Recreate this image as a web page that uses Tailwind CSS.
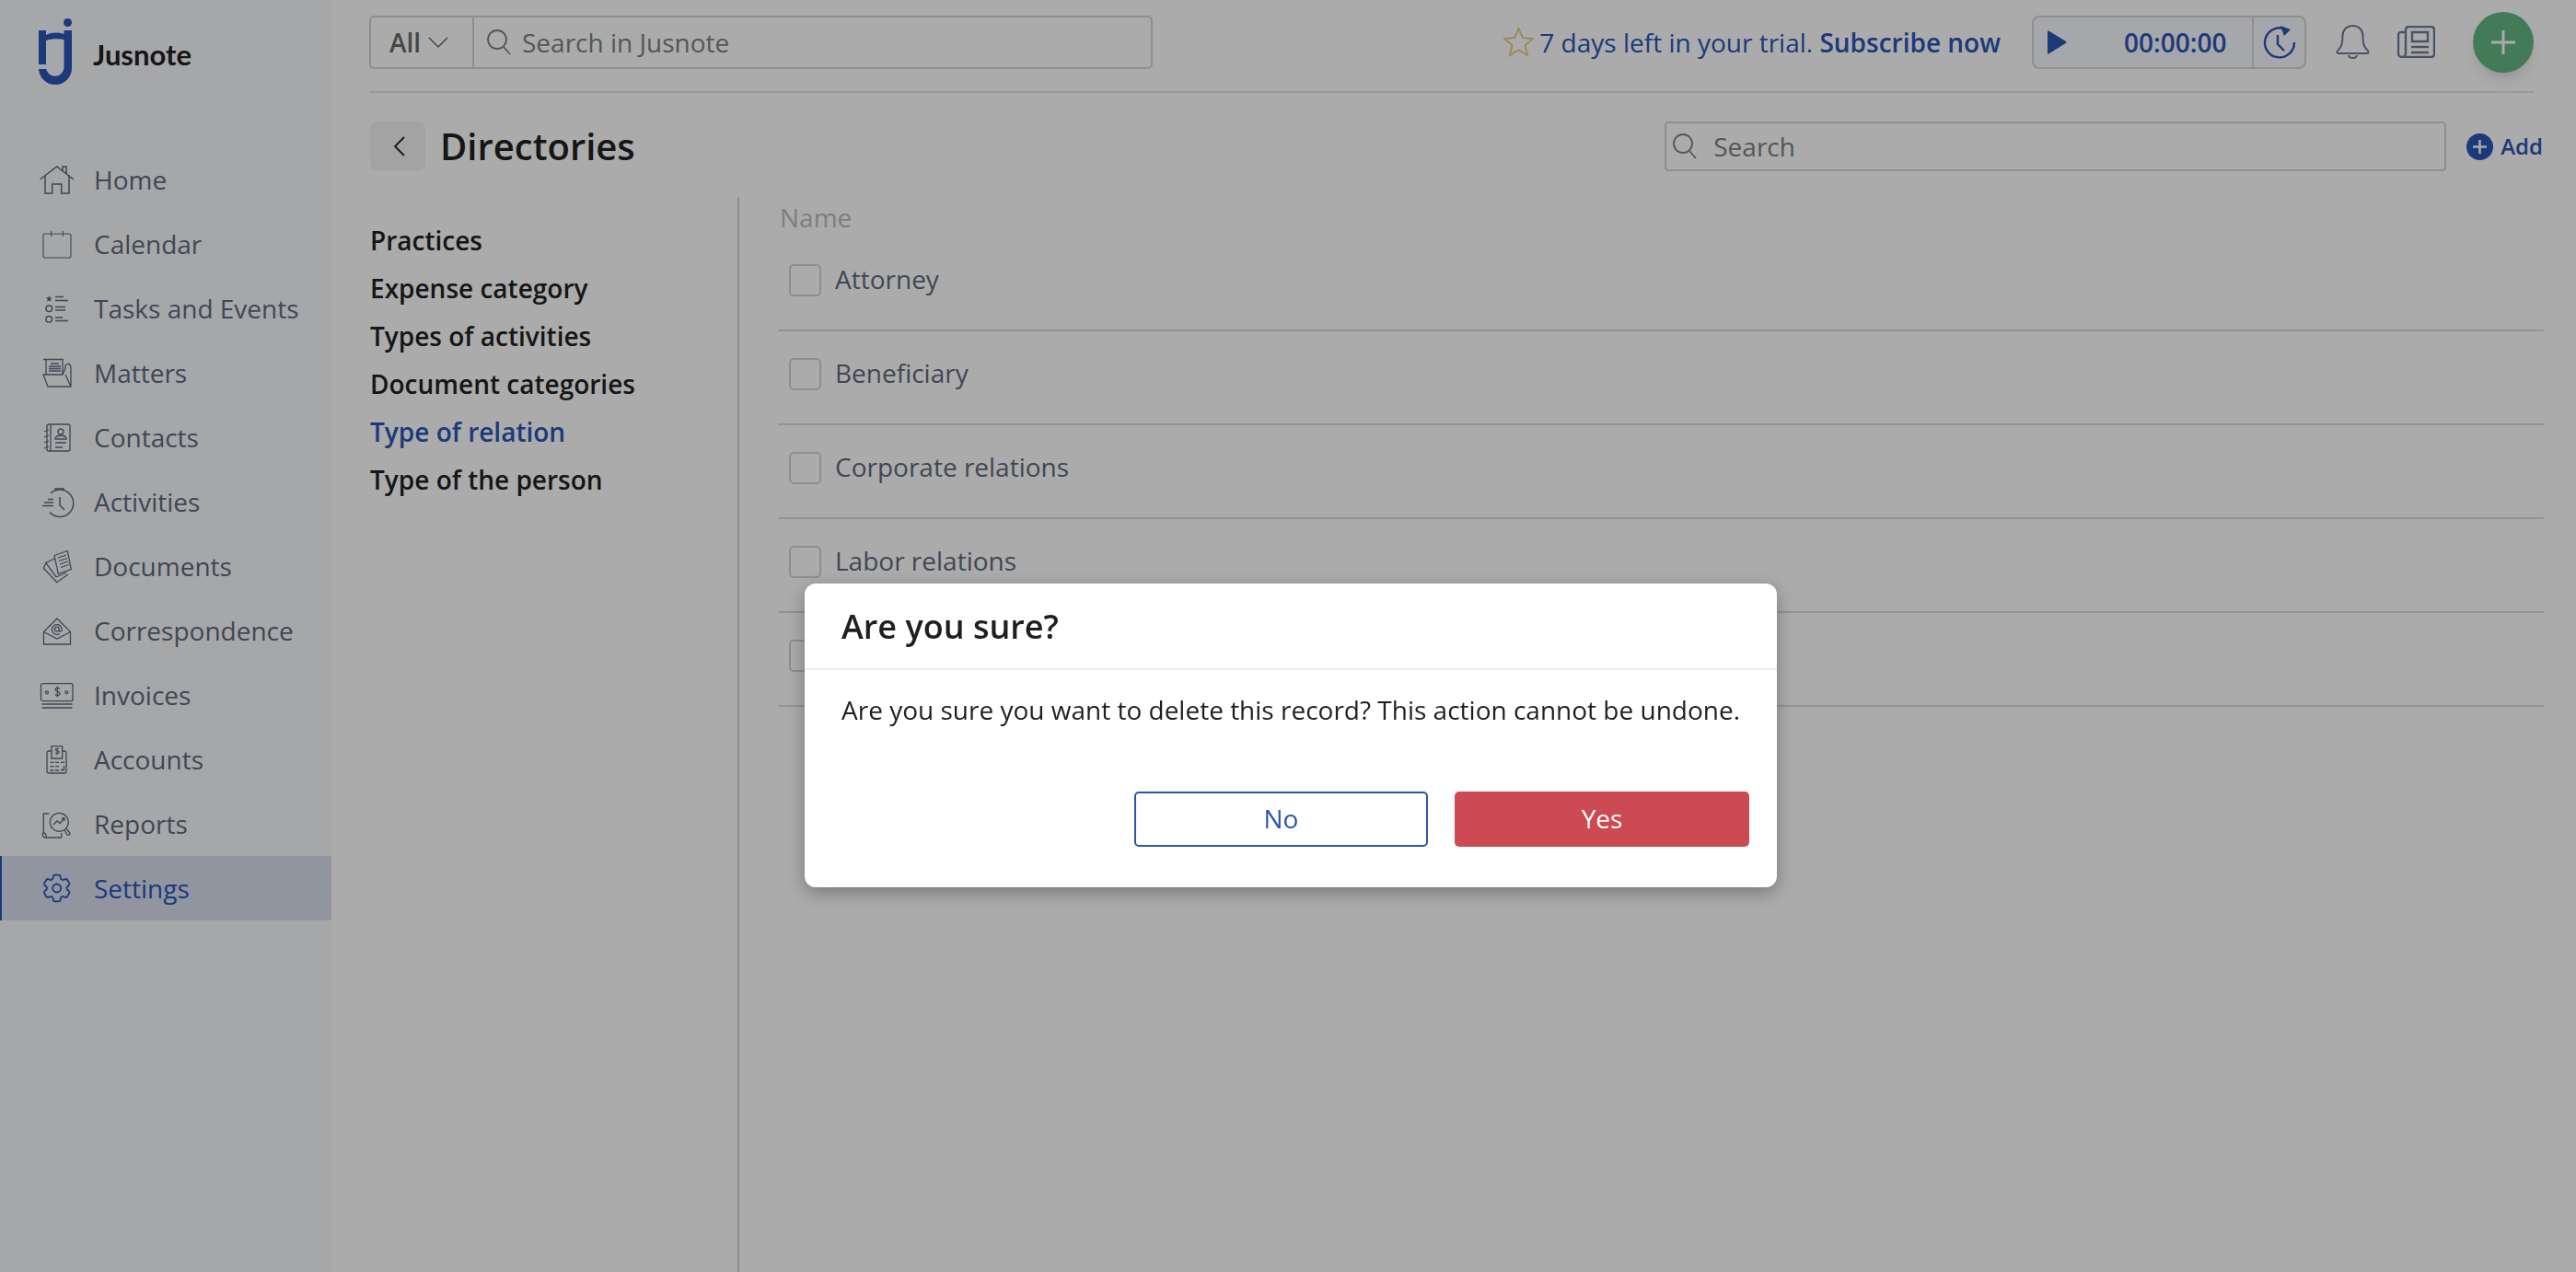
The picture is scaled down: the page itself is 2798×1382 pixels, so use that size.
<!DOCTYPE html>
<html lang="en">
<head>
  <meta charset="UTF-8">
  <title>Jusnote - Directories</title>
  <script src="https://cdn.jsdelivr.net/npm/@tailwindcss/browser@4"></script>
</head>
<body class="font-['Open_Sans',sans-serif] bg-white">
  <div class="flex h-[1382px] w-[2798px] overflow-hidden">

    <!-- sidebar -->
    <aside class="w-[360px] shrink-0 bg-[#f8f9fc] text-[#5f6b7c] text-[28px]">
      <div class="h-[160px] flex items-start">
        <svg class="ml-[40px] mt-[17px] w-[42px] h-[78px]" viewBox="40 17 42 78" fill="#2a56b8">
          <circle cx="73.5" cy="24.5" r="4.5"/>
          <path d="M42 33h8v5c6-3 13-3 19.5-1V33H78v41a18 18 0 0 1-36 0v1h8v-1a9.8 9.8 0 0 0 19.5 0V43c-6-1-14-1-19.5 1v26h-8z"/>
        </svg>
        <span class="ml-[19px] mt-[36px] text-[#222] font-['Lato',sans-serif] font-bold text-[31px]">Jusnote</span>
      </div>
      <nav>
        <a class="h-[70px] flex items-center gap-[20px] pl-[42px]">
          <svg class="w-[40px] h-[40px]" viewBox="0 0 40 40" fill="none" stroke="currentColor" stroke-width="1.5"><path d="M1.5 20 19.7 6 38 20M7 15v20h7.7V25h10v10H33V15M26 11V6h4v8.5"/></svg>
          <span>Home</span>
        </a>
        <a class="h-[70px] flex items-center gap-[20px] pl-[42px]">
          <svg class="w-[40px] h-[40px]" viewBox="0 0 40 40" fill="none" stroke="currentColor" stroke-width="1.1"><path d="M7 9h26a2 2 0 0 1 2 2v22a2 2 0 0 1-2 2H7a2 2 0 0 1-2-2V11a2 2 0 0 1 2-2zM13.700 6v6M26.300 6v6"/></svg>
          <span>Calendar</span>
        </a>
        <a class="h-[70px] flex items-center gap-[20px] pl-[42px]">
          <svg class="w-[40px] h-[40px]" viewBox="0 0 40 40" fill="none" stroke="currentColor" stroke-width="1.5"><path d="m11.300 6 1 2.400 2.600.2-2 1.700.6 2.500-2.200-1.300-2.200 1.300.6-2.500-2-1.700 2.600-.2z" fill="currentColor" stroke="none"/><circle cx="11.300" cy="20.300" r="3.300"/><circle cx="11.300" cy="31.700" r="3.300"/><path d="M18 7.500h9M18 11.500h14M18 18.500h11M18 22h11M18 30h8M18 33.500h14"/></svg>
          <span>Tasks and Events</span>
        </a>
        <a class="h-[70px] flex items-center gap-[20px] pl-[42px]">
          <svg class="w-[40px] h-[40px]" viewBox="0 0 40 40" fill="none" stroke="currentColor" stroke-width="1.300"><path d="M5 5.500h22M8 5.500V22M26 5.500V22M13 10h9M11 13h13M11 15.500h13M11 18h13M5 22h21l3-7v-3l2-1.500h2.500L35 14v21H10zM29 22l6 13"/></svg>
          <span>Matters</span>
        </a>
        <a class="h-[70px] flex items-center gap-[20px] pl-[42px]">
          <svg class="w-[40px] h-[40px]" viewBox="0 0 40 40" fill="none" stroke="currentColor" stroke-width="1.300"><rect x="9" y="6" width="25" height="29" rx="2"/><path d="M13 6v29M6 14l5-2M6 20l5-2M6 26l5-2M6 32l5-2M18 26h12M18 31h8M18 22c0-5 12-5 12 0z"/><circle cx="24" cy="14" r="3"/></svg>
          <span>Contacts</span>
        </a>
        <a class="h-[70px] flex items-center gap-[20px] pl-[42px]">
          <svg class="w-[40px] h-[40px]" viewBox="0 0 40 40" fill="none" stroke="currentColor" stroke-width="1.500"><path d="M13 11A14.700 14.700 0 1 1 12 31.500M17 6h11M23 15v9l5 5M10 17.500h6M6 21h10M4 24.500h12"/></svg>
          <span>Activities</span>
        </a>
        <a class="h-[70px] flex items-center gap-[20px] pl-[42px]">
          <svg class="w-[40px] h-[40px]" viewBox="0 0 40 40" fill="none" stroke="currentColor" stroke-width="1.300"><path d="m17 8.500 14.300-5 4 20-14 5zM21 11l9-3M22 14.500l9-3M23 18l9-3M24 21.500l9-3M17 12 7.700 16.500 19 32l11-5M7.700 17l-2.400 5.300 14.400 15.400L32 29"/></svg>
          <span>Documents</span>
        </a>
        <a class="h-[70px] flex items-center gap-[20px] pl-[42px]">
          <svg class="w-[40px] h-[40px]" viewBox="0 0 40 40" fill="none" stroke="currentColor" stroke-width="1.300"><path d="M5.500 21.500 20 7l14.500 14.500V35h-29zM5.500 21.500 20 29l14.500-7.500"/><path d="M22.300 18.500a2.400 2.400 0 1 1-4.800 0 2.400 2.400 0 0 1 4.800 0v1.200c0 2 3 2 3-.7a5.400 5.400 0 1 0-2.500 4.500"/></svg>
          <span>Correspondence</span>
        </a>
        <a class="h-[70px] flex items-center gap-[20px] pl-[42px]">
          <svg class="w-[40px] h-[40px]" viewBox="0 0 40 40" fill="none" stroke="currentColor" stroke-width="1.300"><rect x="2.500" y="7.700" width="34.500" height="19" rx="2"/><circle cx="9" cy="17.300" r="1.500"/><circle cx="30.300" cy="17.300" r="1.500"/><path d="M3.500 30h33M3.500 34h33M23 13.500c-1-1.500-5-1.500-5 .8 0 2.700 5.200 1.500 5.200 4.200 0 2.500-4.300 2.300-5.500.8M20.300 10.500v12"/></svg>
          <span>Invoices</span>
        </a>
        <a class="h-[70px] flex items-center gap-[20px] pl-[42px]">
          <svg class="w-[40px] h-[40px]" viewBox="0 0 40 40" fill="none" stroke="currentColor" stroke-width="1.300"><path d="M14 11h-3a2 2 0 0 0-2 2v20a2 2 0 0 0 2 2h17a2 2 0 0 0 2-2V13a2 2 0 0 0-2-2h-2M14 5.700h11.700V19H14zM12.500 23.300h4M18 23.300h4M24 23.300h4M12.500 27.700h4M18 27.700h4M12.500 32h4M18 32h4M27.500 27v4.500H24"/><path d="M22 9c-.7-1-3.700-1-3.700.5 0 1.800 3.900 1 3.900 2.800 0 1.600-3.200 1.500-4 .5M20 7.500v8" stroke-width="1.100"/></svg>
          <span>Accounts</span>
        </a>
        <a class="h-[70px] flex items-center gap-[20px] pl-[42px]">
          <svg class="w-[40px] h-[40px]" viewBox="0 0 40 40" fill="none" stroke="currentColor" stroke-width="1.300"><path d="M11.300 9h-6v21c-2 0-1 5 2 5h17.500M24.700 30v5M5.300 30c2 0 3 2 3 5"/><circle cx="22.300" cy="18.300" r="10"/><path d="m16 21 4-4 3 2.500 5-5.500M25 14h3v3"/><path d="m28 27 3 5a2 2 0 0 0 3-2l-4-4.500"/></svg>
          <span>Reports</span>
        </a>
        <a class="h-[70px] flex items-center gap-[20px] pl-[40px] border-l-2 border-[#2a56b8] bg-[#d8deee] text-[#2a56b8]">
          <svg class="w-[40px] h-[40px]" viewBox="0 0 40 40" fill="none" stroke="currentColor" stroke-width="1.800"><path transform="translate(0.500 .8) scale(1.600)" stroke-width="1.150" d="M9.594 3.940c.09-.542.56-.94 1.110-.94h2.593c.55 0 1.020.398 1.110.94l.213 1.281c.063.374.313.686.645.87.074.04.147.083.22.127.325.196.72.257 1.075.124l1.217-.456a1.125 1.125 0 0 1 1.370.49l1.296 2.247a1.125 1.125 0 0 1-.26 1.431l-1.003.827c-.293.241-.438.613-.43.992a7.723 7.723 0 0 1 0 .255c-.008.378.137.75.43.991l1.004.827c.424.35.534.955.26 1.430l-1.298 2.247a1.125 1.125 0 0 1-1.369.491l-1.217-.456c-.355-.133-.75-.072-1.076.124a6.470 6.470 0 0 1-.22.128c-.331.183-.581.495-.644.869l-.213 1.281c-.09.543-.56.94-1.110.94h-2.594c-.55 0-1.019-.398-1.110-.94l-.213-1.281c-.062-.374-.312-.686-.644-.87a6.520 6.520 0 0 1-.22-.127c-.325-.196-.72-.257-1.076-.124l-1.217.456a1.125 1.125 0 0 1-1.369-.49l-1.297-2.247a1.125 1.125 0 0 1 .26-1.431l1.004-.827c.292-.24.437-.613.43-.991a6.932 6.932 0 0 1 0-.255c.007-.38-.138-.751-.43-.992l-1.004-.827a1.125 1.125 0 0 1-.26-1.430l1.297-2.247a1.125 1.125 0 0 1 1.370-.491l1.216.456c.356.133.751.072 1.076-.124.072-.044.146-.086.22-.128.332-.183.582-.495.644-.869l.214-1.280Z"/><circle cx="19.700" cy="20" r="4.500"/></svg>
          <span>Settings</span>
        </a>
      </nav>
    </aside>

    <!-- main -->
    <main class="flex-1 pl-[41px]">
      <header class="h-[101px] w-[2351px] pb-[8px] flex items-center border-b-2 border-[#e6e6e6]">
        <div class="w-[851px] h-[58px] flex border-2 border-[#d5d5d5] rounded-[5px] text-[28px]">
          <div class="w-[112px] flex items-center border-r-2 border-[#d5d5d5] pl-[20px] text-[#6a6a6a] font-semibold">
            <span>All</span>
            <svg class="ml-[8px] w-[22px] h-[14px]" viewBox="0 0 22 14" fill="none" stroke="currentColor" stroke-width="1.500"><path d="m1 2 10 10L21 2"/></svg>
          </div>
          <div class="flex items-center pl-[13px] text-[#808080]">
            <svg class="w-[28px] h-[30px]" viewBox="0 0 28 30" fill="none" stroke="currentColor" stroke-width="1.800"><circle cx="12" cy="12" r="10"/><path d="m19 20 7 8"/></svg>
            <span class="ml-[11px]">Search in Jusnote</span>
          </div>
        </div>

        <div class="ml-auto flex items-center text-[#2a56b8] text-[28px]">
          <svg class="w-[33px] h-[33px]" viewBox="0 0 33 33" fill="none" stroke="#e8c97f" stroke-width="1.800"><path d="m16.500 2 4.400 10.200 11 .9-8.400 7.200 2.600 10.800-9.600-5.800-9.600 5.800 2.600-10.800L1.100 13.100l11-.9z"/></svg>
          <span class="ml-[6px]">7 days left in your trial. <b class="font-semibold">Subscribe now</b></span>
          <div class="ml-[34px] w-[298px] h-[58px] flex border-2 border-[#d5d5d5] rounded-[8px] bg-[#f8fafe]">
            <div class="w-[237px] flex items-center pl-[14px]">
              <svg class="w-[22px] h-[26px]" viewBox="0 0 22 26" fill="currentColor"><path d="M1 1.500c0-1 1-1.300 1.700-.8L21 12c.7.500.7 1.300 0 1.800L2.700 25.300c-.7.500-1.700.2-1.700-.8z"/></svg>
              <span class="ml-[62px] font-semibold">00:00:00</span>
            </div>
            <div class="flex-1 flex items-center justify-center border-l-2 border-[#d5d5d5]">
              <svg class="w-[38px] h-[38px]" viewBox="0 0 38 38" fill="none" stroke="currentColor" stroke-width="2.400"><path d="M27 5.500A16 16 0 1 0 35 19"/><path d="M17 11v10l7 7"/><path d="m20 1 11 4-7 7z" fill="currentColor" stroke="none"/></svg>
            </div>
          </div>
          <svg class="ml-[32px] w-[37px] h-[38px] text-[#6e7d94]" viewBox="0 0 37 38" fill="none" stroke="currentColor" stroke-width="2"><path d="M18.500 1c-7 0-11 5-11 11 0 7-.5 11-3.500 14-1.500 1.500-2.500 2-2.500 3.500 0 1 1 1.500 2 1.500h30c1 0 2-.5 2-1.500 0-1.500-1-2-2.500-3.500-3-3-3.500-7-3.500-14 0-6-4-11-11-11zM14 33c.5 4 8.500 4 9 0"/></svg>
          <svg class="ml-[30px] w-[41px] h-[35px] text-[#6e7d94]" viewBox="0 0 41 35" fill="none" stroke="currentColor" stroke-width="2.400"><path d="M9 7H4a3 3 0 0 0-3 3v20a4 4 0 0 0 4 4 4 4 0 0 0 4-4V4a3 3 0 0 1 3-3h25a3 3 0 0 1 3 3v27a3 3 0 0 1-3 3H5M16 7h17v10H16zM15 23h19M15 29h19"/></svg>
          <div class="ml-[41px] w-[66px] h-[66px] rounded-full bg-[#64b682] shadow-lg flex items-center justify-center">
            <svg class="w-[28px] h-[28px]" viewBox="0 0 28 28" stroke="#fff" stroke-width="3"><path d="M14 1v26M1 14h26"/></svg>
          </div>
        </div>
      </header>

      <div class="mt-[31px] h-[54px] flex items-center">
        <div class="w-[60px] h-[54px] ml-px rounded-[8px] bg-[#f3f3f3] flex items-center justify-center">
          <svg class="w-[14px] h-[24px] ml-[3px]" viewBox="0 0 14 24" fill="none" stroke="#222" stroke-width="1.800"><path d="M12 2 2 12l10 10"/></svg>
        </div>
        <h1 class="ml-[16px] text-[40px] font-semibold text-[#222]">Directories</h1>
        <div class="ml-auto w-[849px] h-[54px] flex items-center border-2 border-[#d5d5d5] rounded-[4px] pl-[6px] text-[28px] text-[#808080] bg-white">
          <svg class="w-[28px] h-[30px]" viewBox="0 0 28 30" fill="none" stroke="currentColor" stroke-width="1.800"><circle cx="12" cy="12" r="10"/><path d="m19 20 7 8"/></svg>
          <span class="ml-[17px]">Search</span>
        </div>
        <div class="ml-[22px] mr-[36px] flex items-center text-[#2a56b8] text-[24px] font-semibold">
          <span class="w-[29px] h-[29px] rounded-full bg-current flex items-center justify-center">
            <svg class="w-[17px] h-[17px]" viewBox="0 0 17 17" stroke="#fff" stroke-width="2.500"><path d="M8.500 1v15M1 8.500h15"/></svg>
          </span>
          <span class="ml-[8px]">Add</span>
        </div>
      </div>

      <div class="mt-[28px] flex h-[1168px]">
        <ul class="w-[402px] pl-px pt-[21px] border-r-2 border-[#d5d5d5] text-[28px] font-semibold text-[#222]">
          <li class="h-[52px] flex items-center">Practices</li>
          <li class="h-[52px] flex items-center">Expense category</li>
          <li class="h-[52px] flex items-center">Types of activities</li>
          <li class="h-[52px] flex items-center">Document categories</li>
          <li class="h-[52px] flex items-center text-[#2a56b8]">Type of relation</li>
          <li class="h-[52px] flex items-center">Type of the person</li>
        </ul>
        <div class="flex-1 pl-[42px] pr-[35px] text-[28px] text-[#5f6b7c]">
          <div class="h-[44px] flex items-center pl-[2px] pb-[1px] text-[#bdbdbd]">Name</div>
          <div class="h-[102px] pt-[29px] pl-[12px] flex items-start border-b-2 border-[#dcdcdc]">
            <span class="w-[35px] h-[35px] border-2 border-[#d5d5d5] rounded-[5px]"></span>
            <span class="ml-[15px] -mt-[5px]">Attorney</span>
          </div>
          <div class="h-[102px] pt-[29px] pl-[12px] flex items-start border-b-2 border-[#dcdcdc]">
            <span class="w-[35px] h-[35px] border-2 border-[#d5d5d5] rounded-[5px]"></span>
            <span class="ml-[15px] -mt-[5px]">Beneficiary</span>
          </div>
          <div class="h-[102px] pt-[29px] pl-[12px] flex items-start border-b-2 border-[#dcdcdc]">
            <span class="w-[35px] h-[35px] border-2 border-[#d5d5d5] rounded-[5px]"></span>
            <span class="ml-[15px] -mt-[5px]">Corporate relations</span>
          </div>
          <div class="h-[102px] pt-[29px] pl-[12px] flex items-start border-b-2 border-[#dcdcdc]">
            <span class="w-[35px] h-[35px] border-2 border-[#d5d5d5] rounded-[5px]"></span>
            <span class="ml-[15px] -mt-[5px]">Labor relations</span>
          </div>
          <div class="h-[102px] pt-[29px] pl-[12px] flex items-start border-b-2 border-[#dcdcdc]">
            <span class="w-[35px] h-[35px] border-2 border-[#d5d5d5] rounded-[5px]"></span>
          </div>
        </div>
      </div>
    </main>
  </div>

  <!-- delete confirmation -->
  <div class="fixed inset-0 bg-black/33">
    <div class="absolute left-[874px] top-[634px] w-[1056px] h-[330px] bg-white rounded-[12px] shadow-[0_6px_20px_rgba(0,0,0,0.3)] text-[#1f1f1f]">
      <div class="h-[94px] pl-[40px] pt-[2px] flex items-center border-b-2 border-[#efefef]">
        <h2 class="text-[36px] font-semibold">Are you sure?</h2>
      </div>
      <p class="pl-[40px] pt-[22px] text-[28px]">Are you sure you want to delete this record? This action cannot be undone.</p>
      <div class="mt-[68px] flex justify-end gap-[29px] pr-[30px] text-[28px]">
        <button class="w-[319px] h-[60px] pb-[2px] border-2 border-[#2a56a8] rounded-[5px] text-[#2a56a8]">No</button>
        <button class="w-[320px] h-[60px] pb-[2px] rounded-[5px] bg-[#cc4a51] text-white">Yes</button>
      </div>
    </div>
  </div>
</body>
</html>
